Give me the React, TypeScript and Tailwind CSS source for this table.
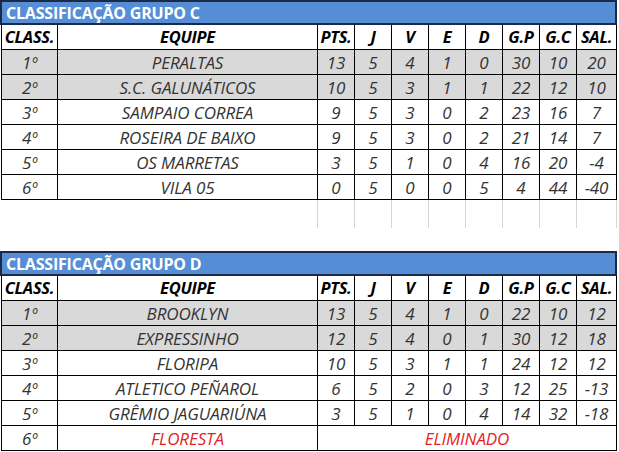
import React from 'react';

type Row = (string | number)[];

const cols = 'grid grid-cols-[56px_260px_37px_37px_37px_37px_37px_37px_37px_40px]';
const headers = ['CLASS.', 'EQUIPE', 'PTS.', 'J', 'V', 'E', 'D', 'G.P', 'G.C', 'SAL.'];

const grupoC: Row[] = [
  ['1º', 'PERALTAS', 13, 5, 4, 1, 0, 30, 10, 20],
  ['2º', 'S.C. GALUNÁTICOS', 10, 5, 3, 1, 1, 22, 12, 10],
  ['3º', 'SAMPAIO CORREA', 9, 5, 3, 0, 2, 23, 16, 7],
  ['4º', 'ROSEIRA DE BAIXO', 9, 5, 3, 0, 2, 21, 14, 7],
  ['5º', 'OS MARRETAS', 3, 5, 1, 0, 4, 16, 20, -4],
  ['6º', 'VILA 05', 0, 5, 0, 0, 5, 4, 44, -40],
];

const grupoD: Row[] = [
  ['1º', 'BROOKLYN', 13, 5, 4, 1, 0, 22, 10, 12],
  ['2º', 'EXPRESSINHO', 12, 5, 4, 0, 1, 30, 12, 18],
  ['3º', 'FLORIPA', 10, 5, 3, 1, 1, 24, 12, 12],
  ['4º', 'ATLETICO PEÑAROL', 6, 5, 2, 0, 3, 12, 25, -13],
  ['5º', 'GRÊMIO JAGUARIÚNA', 3, 5, 1, 0, 4, 14, 32, -18],
];

const cell = 'h-[25px] flex items-center justify-center border-r border-b border-black leading-none whitespace-nowrap';
const dado = 'text-[17px] italic tracking-[-0.1px]';

const Tabela: React.FC<{ titulo: string; rows: Row[]; eliminado?: string }> = ({ titulo, rows, eliminado }) => {
  return (
    <div className="w-[617px]">
      <div className="h-[25px] bg-[#568ed6] border-2 border-[#1c2a48] flex items-center pl-[4px]">
        <span className="text-[16px] font-bold text-white tracking-[-0.2px] leading-none">{titulo}</span>
      </div>
      <div className={`${cols} ml-px border-l border-black`}>
        {headers.map((h) => (
          <div key={h} className={`${cell} text-[16.5px] font-bold italic text-black tracking-[-0.3px]`}>{h}</div>
        ))}
        {rows.map((r, i) =>
          r.map((v, j) => (
            <div
              key={`${i}-${j}`}
              className={`${cell} ${dado} text-[#333333] ${i < 2 ? 'bg-[#d9d9d9]' : 'bg-white'}`}
            >
              {v}
            </div>
          ))
        )}
        {eliminado && (
          <>
            <div className={`${cell} ${dado} text-[#333333]`}>6º</div>
            <div className={`${cell} ${dado} text-[#e41e1e]`}>{eliminado}</div>
            <div className={`${cell} ${dado} col-span-8 text-[#e41e1e]`}>ELIMINADO</div>
          </>
        )}
      </div>
    </div>
  );
};

export default function App() {
  return (
    <div className="w-[619px] h-[452px] bg-white overflow-hidden font-['Open_Sans',sans-serif]">
      <Tabela titulo="CLASSIFICAÇÃO GRUPO C" rows={grupoC} />
      <div className="h-[51px]">
        <div className={`${cols} ml-px pl-px h-[28px]`}>
          <div />
          <div className="border-r border-[#d6d6d6]" />
          {[0, 1, 2, 3, 4, 5, 6, 7].map((k) => (
            <div key={k} className="border-r border-[#d6d6d6]" />
          ))}
        </div>
      </div>
      <Tabela titulo="CLASSIFICAÇÃO GRUPO D" rows={grupoD} eliminado="FLORESTA" />
    </div>
  );
}
